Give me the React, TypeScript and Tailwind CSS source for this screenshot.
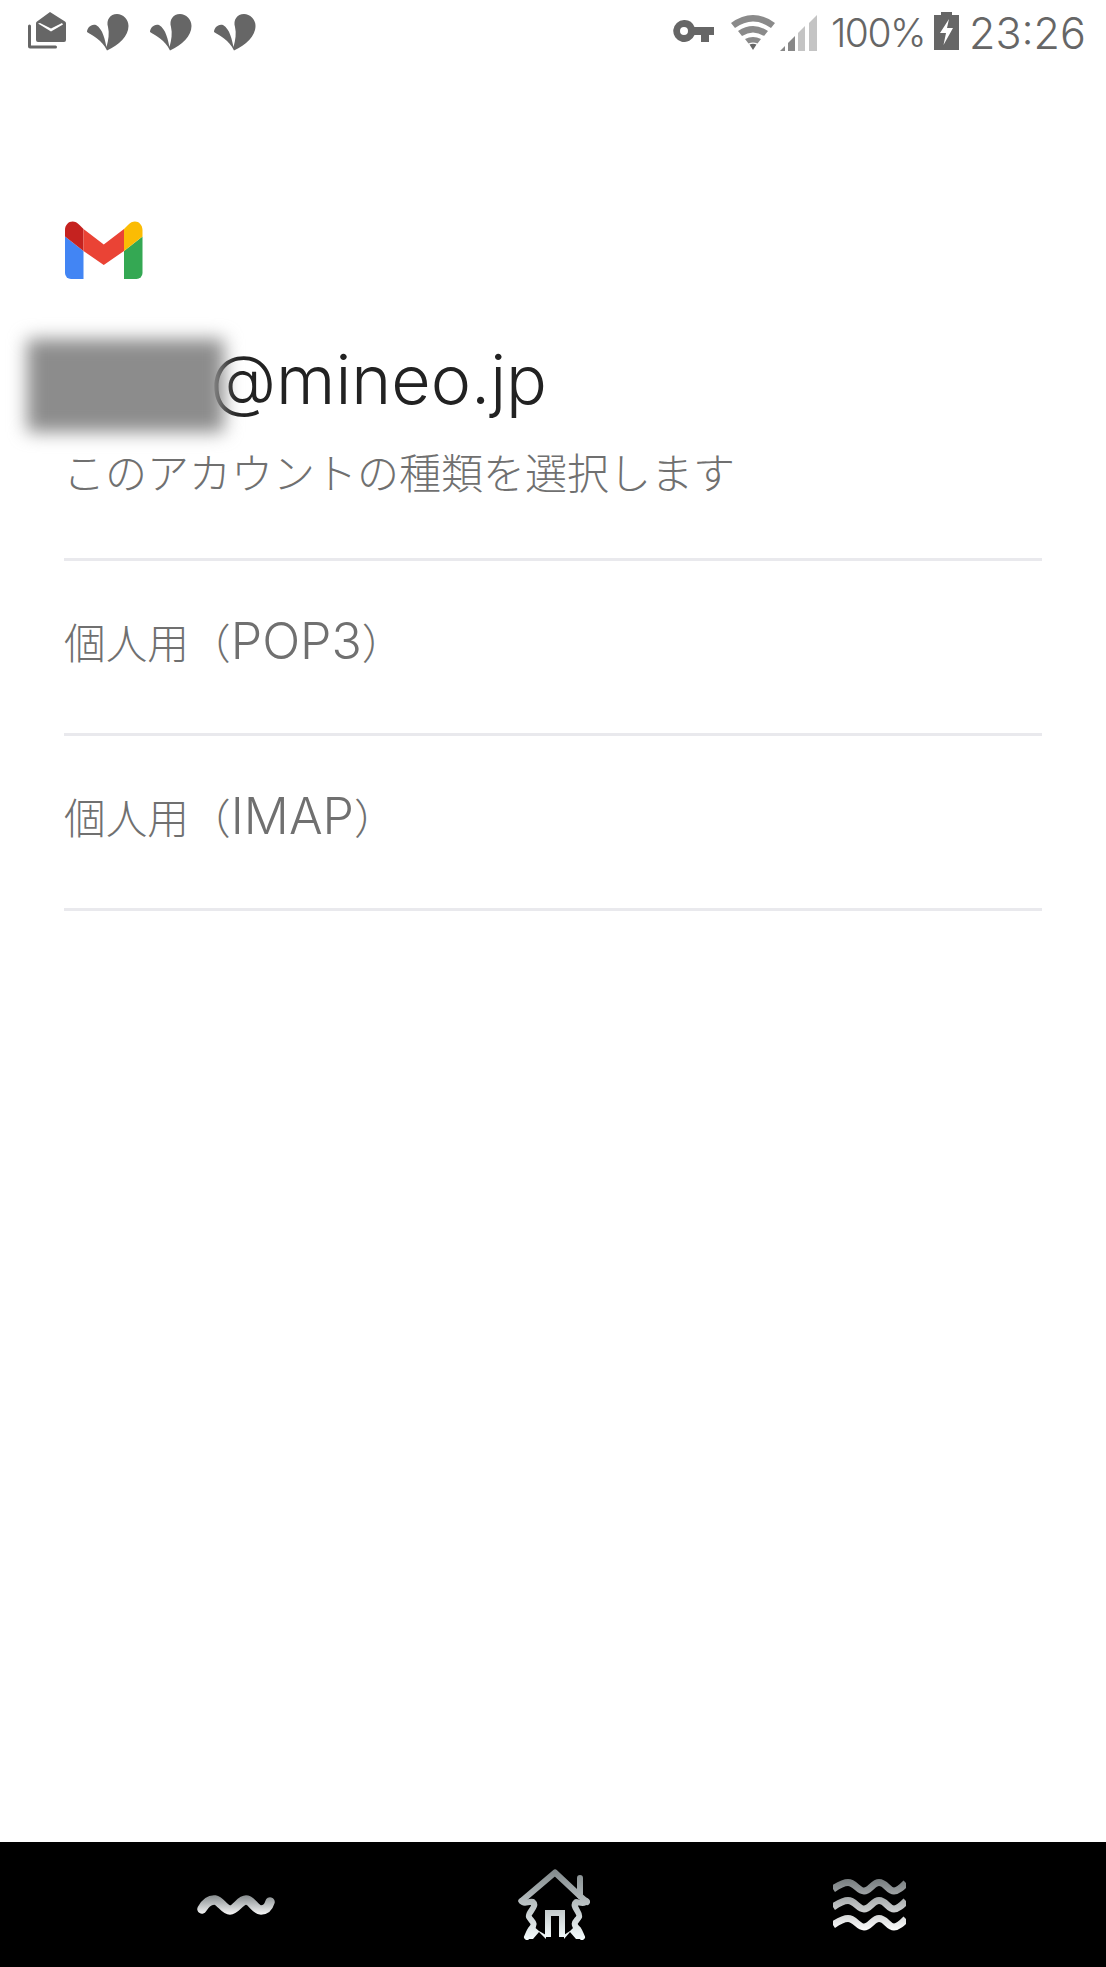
import React from "react";

const Sprout = () => (
  <svg width="42" height="37" viewBox="0 0 42 37" className="block">
    <path fill="#666" d="M20 36.5C32 31 41.500 22 41.500 12C41.500 5 36 0 30 0C23 0 19 6 21 13C22.500 19 21.500 26 19.500 33C18 26 16 15 9 11C4 9.500 0 14 0 18C6 22 15 26 20 36.500Z" />
  </svg>
);

const MailIcon = () => (
  <svg width="38" height="37" viewBox="0 0 38 37" className="block">
    <path fill="#666" d="M0 14a1.500 1.500 0 0 1 3 0V33.500H27.500a1.500 1.500 0 0 1 0 3H2a2 2 0 0 1-2-2Z" />
    <path fill="#666" d="M22 0L37 9.500Q38 10.200 38 11.500V28a2 2 0 0 1-2 2H10a2 2 0 0 1-2-2V11.500Q8 10.200 9 9.500Z" />
    <path fill="#fff" d="M10 11.500L12 11L23 16.500L34 11L35 12.500L23 19.500Z" />
  </svg>
);

const KeyIcon = () => (
  <svg width="41" height="22" viewBox="0 0 41 22" className="block">
    <path fill="#666" fillRule="evenodd" d="M11 0a11 11 0 0 1 10.500 7H41V15H36V22H28V15H21.500A11 11 0 1 1 11 0ZM11 7a4 4 0 1 0 0 8a4 4 0 0 0 0-8Z" />
  </svg>
);

const WifiIcon = () => (
  <svg width="44" height="36" viewBox="0 0 44 36" className="block">
    <path fill="#8a8a8a" d="M0 9Q22-7 44 9L40 14Q22 1 4 14Z" />
    <path fill="#8a8a8a" d="M7 17Q22 7 37 17L33 22Q22 15 11 22Z" />
    <path fill="#8a8a8a" d="M14 25Q22 21 30 25L26.500 29.500Q22 27.500 17.500 29.500Z" />
    <path fill="#666" d="M18.500 30.500Q22 29.200 25.500 30.500L22 36Z" />
  </svg>
);

const SignalIcon = () => (
  <svg width="37" height="36" viewBox="0 0 37 36" className="block">
    <path fill="#888" d="M0 36L5 31V36Z" />
    <path fill="#888" d="M8 36V28L15 21V36Z" />
    <path fill="#c4c4c4" d="M18 36V18L25 11V36Z" />
    <path fill="#c4c4c4" d="M29 36V8L37 0V36Z" />
  </svg>
);

const BatteryIcon = () => (
  <svg width="25" height="38" viewBox="0 0 25 38" className="block">
    <path fill="#666" d="M7 0H18V3H25V38H0V3H7Z" />
    <path fill="#fff" d="M15 7L6 21H12L9.500 33L19 16H13Z" />
  </svg>
);

const GmailLogo = () => (
  <svg width="78" height="58" viewBox="0 0 78 58" className="block">
    <path fill="#4285f4" d="M0 15.500L18.500 30V58H6A6 6 0 0 1 0 52Z" />
    <path fill="#34a853" d="M77.500 15.500L59 30V58H71.500A6 6 0 0 0 77.500 52Z" />
    <path fill="#fbbc04" d="M59 8L63 4C69 -3 77.500 1 77.500 9V15.500L59 30Z" />
    <path fill="#c5221f" d="M18.500 8L14.500 4C8.500 -3 0 1 0 9V15.500L18.500 30Z" />
    <path fill="#ea4335" d="M18.500 8L38.750 23.500L59 8V30L38.750 44L18.500 30Z" />
  </svg>
);

const WaveNav = () => (
  <svg width="78" height="22" viewBox="0 0 78 22" className="block">
    <defs>
      <linearGradient id="wg1" gradientUnits="userSpaceOnUse" x1="0" y1="0" x2="0" y2="22">
        <stop offset="0" stopColor="#7f8587" />
        <stop offset="1" stopColor="#ffffff" />
      </linearGradient>
    </defs>
    <path fill="none" stroke="url(#wg1)" strokeWidth="9.500" strokeLinecap="round" d="M5 15C9 8 13 5.500 18 6C24 7 27 16 33 16C39 16 43 6 49 6C55 6 58 16 64 16C69 16 71.500 13 73 8" />
  </svg>
);

const HomeNav = () => (
  <svg width="72" height="71" viewBox="0 0 72 71" className="block">
    <defs>
      <linearGradient id="wg2" gradientUnits="userSpaceOnUse" x1="0" y1="0" x2="0" y2="70">
        <stop offset="0" stopColor="#80888a" />
        <stop offset="1" stopColor="#f4fbfc" />
      </linearGradient>
    </defs>
    <g fill="none" stroke="url(#wg2)" strokeWidth="6" strokeLinejoin="round" strokeLinecap="round">
      <path d="M3.500 32L37 3.500L62 27" />
      <path d="M62 9V27L69 33" />
      <path d="M3.500 32C6 36 10 32 15 33C20 37 9 44 11 48C13 52 19 54 13 60C11 63 10 66 9 68" />
      <path d="M68.500 32C66 36 62 33 58 33C53 37 63 44 61 48C59 52 53 54 60 60C62 63 63 66 64 68" />
    </g>
    <path fill="none" stroke="url(#wg2)" strokeWidth="6" d="M30 68V44H44V68" />
    <path fill="url(#wg2)" d="M8 70L14 56L21 62L28 66V70L21 63L15 70Z" />
    <path fill="url(#wg2)" d="M65 70L58 56L52 62L46 66V70L52 63L58 70Z" />
  </svg>
);

const WavesNav = () => (
  <svg width="73" height="52" viewBox="0 0 73 52" className="block">
    <defs>
      <linearGradient id="wg3" gradientUnits="userSpaceOnUse" x1="0" y1="0" x2="0" y2="52">
        <stop offset="0" stopColor="#767c7e" />
        <stop offset="1" stopColor="#ffffff" />
      </linearGradient>
    </defs>
    <g fill="none" stroke="url(#wg3)" strokeWidth="7">
      <path d="M0 10C6 6 10 3.500 15 3.500C22 3.500 25 12 31 12C37 12 40 3.500 46 3.500C53 3.500 55 12 61 12C65 12 69 8 73 4" />
      <path d="M0 28C6 24 10 21.500 15 21.500C22 21.500 25 30 31 30C37 30 40 21.500 46 21.500C53 21.500 55 30 61 30C65 30 69 26 73 22" />
      <path d="M0 46C6 42 10 39.500 15 39.500C22 39.500 25 48 31 48C37 48 40 39.500 46 39.500C53 39.500 55 48 61 48C65 48 69 44 73 40" />
    </g>
  </svg>
);

const jp = "font-['Inter','Noto_Sans_CJK_JP',sans-serif] font-light";

export default function App() {
  return (
    <div className="w-[1106px] h-[1967px] bg-white flex flex-col overflow-hidden">
      <header className="h-[64px] flex items-start pt-[12px] pl-[28px] pr-[20px] text-[#666] font-['Inter',sans-serif] font-light">
        <MailIcon />
        <div className="ml-[21px] mt-[2px]"><Sprout /></div>
        <div className="ml-[21px] mt-[2px]"><Sprout /></div>
        <div className="ml-[22px] mt-[2px]"><Sprout /></div>
        <div className="ml-auto mt-[8px]"><KeyIcon /></div>
        <div className="ml-[17px] mt-[2px]"><WifiIcon /></div>
        <div className="ml-[5px] mt-[3px]"><SignalIcon /></div>
        <span className="ml-[14px] w-[95px] text-[39px] leading-[42px] tracking-[-1.500px] whitespace-nowrap">100%</span>
        <div className="ml-[8px]"><BatteryIcon /></div>
        <span className="ml-[10px] w-[117px] text-[43px] leading-[42px] whitespace-nowrap">23:26</span>
      </header>

      <main className="flex-1 flex flex-col pt-[157px]">
        <div className="pl-[65px]"><GmailLogo /></div>
        <div className="relative mt-[54px] pl-[210px] h-[82px] flex items-center">
          <span className="relative top-[5px] text-[68px] leading-[82px] text-[#222] font-['Inter',sans-serif] font-light">@mineo.jp</span>
          <div className="absolute left-[27px] top-[6px] w-[197px] h-[93px] bg-[#8c8c8c] blur-[9px]" />
        </div>
        <p className={`${jp} ml-[63px] mt-[29px] text-[42px] leading-[60px] text-[#707070]`}>このアカウントの種類を選択します</p>
        <div className="mx-[64px] mt-[54px] border-t-[3px] border-[#e9e9ed]">
          <div className={`${jp} h-[175px] flex items-center pb-[6px] text-[41.700px] text-[#707070] border-b-[3px] border-[#e9e9ed]`}>
            <span>個人用（<span className="text-[50px] leading-none">POP3</span>）</span>
          </div>
          <div className={`${jp} h-[175px] flex items-center pb-[6px] text-[41.700px] text-[#707070] border-b-[3px] border-[#e9e9ed]`}>
            <span>個人用（<span className="text-[50px] leading-none">IMAP</span>）</span>
          </div>
        </div>
      </main>

      <nav className="h-[125px] bg-black flex items-center justify-center gap-[243px] pr-[3px]">
        <WaveNav />
        <HomeNav />
        <div className="mt-[1px]"><WavesNav /></div>
      </nav>
    </div>
  );
}
